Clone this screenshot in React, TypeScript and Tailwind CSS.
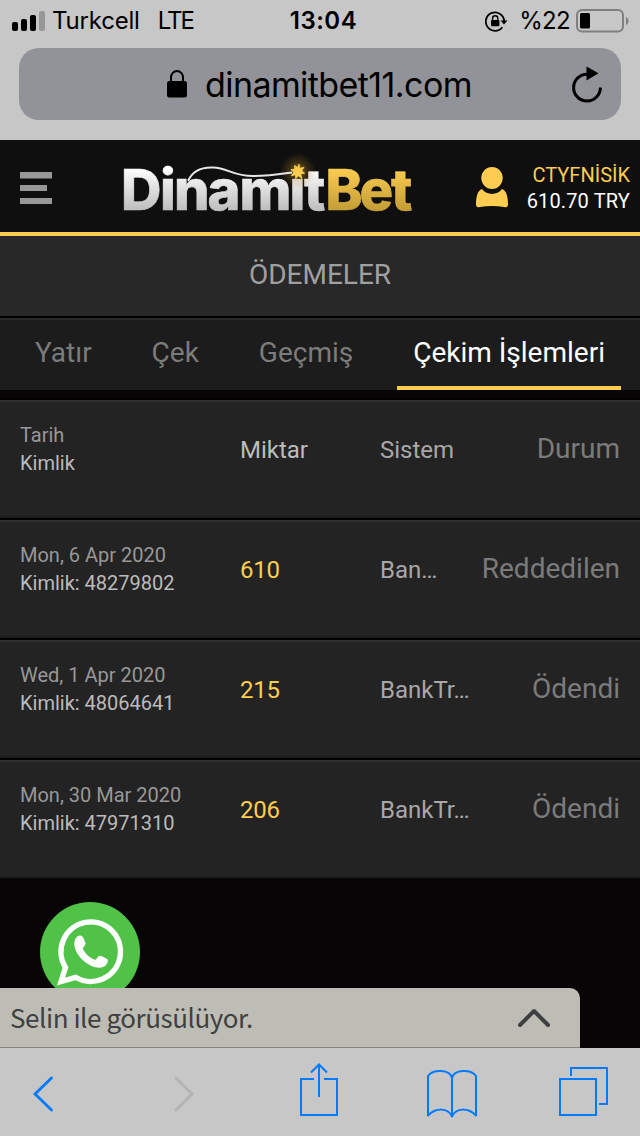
const tabs = ["Yatır", "Çek", "Geçmiş", "Çekim İşlemleri"];

const payments = [
  { date: "Mon, 6 Apr 2020", id: "48279802", amount: "610", system: "Ban…", status: "Reddedilen" },
  { date: "Wed, 1 Apr 2020", id: "48064641", amount: "215", system: "BankTr…", status: "Ödendi" },
  { date: "Mon, 30 Mar 2020", id: "47971310", amount: "206", system: "BankTr…", status: "Ödendi" },
];

const StatusBar = () => {
  return (
    <div className="flex h-[42px] items-center justify-between pl-3 pr-[11px] text-[24px] leading-[40px] text-black">
      <div className="flex w-[240px] items-center">
        <svg width="33" height="20" viewBox="0 0 33 20">
          <rect x="0" y="11" width="6" height="9" rx="2" />
          <rect x="9" y="8" width="6" height="12" rx="2" />
          <rect x="18" y="4" width="6" height="16" rx="2" />
          <rect x="27" y="0" width="6" height="20" rx="2" fill="#979797" />
        </svg>
        <span className="ml-[7px] tracking-[-0.2px]">Turkcell</span>
        <span className="ml-[18px] tracking-[-2px]">LTE</span>
      </div>
      <span className="pl-[6px] font-semibold tracking-[0.5px]">13:04</span>
      <div className="flex w-[240px] items-center justify-end">
        <svg width="23" height="21" viewBox="0 0 23 21" fill="none" stroke="#000" strokeWidth="1.8">
          <path d="M17.3 16.2A9.2 9.2 0 1 1 19.2 10" />
          <path d="M15.5 9.4h7l-3.5 4z" fill="#000" stroke="none" />
          <rect x="6" y="9" width="8.4" height="6.3" rx="1" fill="#000" stroke="none" />
          <path d="M7.6 9V7.3a2.6 2.6 0 0 1 5.2 0V9" strokeWidth="1.4" />
        </svg>
        <span className="ml-[11px] tracking-[-0.7px]">%22</span>
        <svg className="ml-[6px]" width="53" height="24" viewBox="0 0 53 24">
          <rect x="1" y="1" width="46" height="21.5" rx="5" fill="none" stroke="#7f7f7f" strokeWidth="2" />
          <rect x="4" y="4" width="10" height="15.5" rx="1.5" />
          <path d="M50 8c3.4 1.6 3.4 6.4 0 8z" fill="#7f7f7f" />
        </svg>
      </div>
    </div>
  );
};

const AddressBar = () => {
  return (
    <div className="mx-[19px] mt-[6px] flex h-[72px] items-center justify-between rounded-[20px] bg-[#929399] pl-[148px] pr-[18px]">
      <div className="flex items-center">
        <svg width="20" height="28" viewBox="0 0 20 28">
          <rect x="0" y="11" width="20" height="16.5" rx="2.5" />
          <path d="M4 13V7.5a6 6.5 0 0 1 12 0V13" fill="none" stroke="#000" strokeWidth="2" />
        </svg>
        <span className="ml-[18px] pt-[2px] text-[34px] leading-[40px] tracking-[-0.58px] text-black">
          dinamitbet11.com
        </span>
      </div>
      <svg width="32" height="38" viewBox="0 0 32 38">
        <path d="M16 9.2A13.4 13.4 0 1 0 29.4 22.5" fill="none" stroke="#000" strokeWidth="3" />
        <path d="M15.5 1.5 27.5 8.3 15.5 15.5z" />
      </svg>
    </div>
  );
};

const Logo = () => {
  return (
    <svg width="300" height="86" viewBox="118 143 300 86" className="font-[Inter,sans-serif]">
      <defs>
        <linearGradient id="silver" gradientUnits="userSpaceOnUse" x1="0" y1="168" x2="0" y2="211">
          <stop offset="0" stopColor="#ffffff" />
          <stop offset="1" stopColor="#bdbdbd" />
        </linearGradient>
        <linearGradient id="gold" gradientUnits="userSpaceOnUse" x1="0" y1="168" x2="0" y2="211">
          <stop offset="0" stopColor="#fccd50" />
          <stop offset="1" stopColor="#c39c35" />
        </linearGradient>
        <radialGradient id="glow">
          <stop offset="0" stopColor="#f5c23f" stopOpacity="0.6" />
          <stop offset="0.5" stopColor="#b98a24" stopOpacity="0.25" />
          <stop offset="1" stopColor="#b98a24" stopOpacity="0" />
        </radialGradient>
      </defs>
      <text x="121 160 174 207.5 239.500 289.500 304" y="210" fontSize="56" fontWeight="800" fill="url(#silver)" stroke="url(#silver)" strokeWidth="0.6">
        Dinamit
      </text>
      <text x="325.5 359.5 391" y="210" fontSize="56" fontWeight="800" fill="url(#gold)" stroke="url(#gold)" strokeWidth="0.6">
        Bet
      </text>
      {/* the spark takes the place of the second dot */}
      <rect x="289" y="162" width="15" height="16.500" fill="#0f0f0f" />
      <circle cx="298" cy="171" r="18" fill="url(#glow)" />
      <path d="M188 181c4-9 13-14 25-13.500 15 .5 20 8.500 40 8.500 16 0 28-2 39-3.500" fill="none" stroke="#e6e6e6" strokeWidth="2" />
      <path d="m299 164 .8 4.300 4.200-1-2.300 3.500 3 2.400-4 .7 1.300 4.600-3.700-2.700-2.600 3-.3-4.100-4 1.200 2.200-3.600-2.600-2.800 3.800-.2-.2-3.900 3 2z" fill="#fccd50" stroke="#fccd50" strokeWidth="0.8" />
    </svg>
  );
};

const Header = () => {
  return (
    <div className="flex h-24 border-b-4 border-[#fccc50] bg-[#0f0f0f] pl-5 pr-[10px]">
      <svg className="mt-[32px]" width="32" height="32" viewBox="0 0 32 32" fill="#989898">
        <rect width="32" height="6.5" />
        <rect y="13" width="27" height="6" />
        <rect y="26" width="32" height="6" />
      </svg>
      <div className="ml-[66px] mt-[3px]">
        <Logo />
      </div>
      <svg className="ml-[58px] mt-[27px]" width="32" height="41" viewBox="0 0 32 41" fill="#fccd50">
        <ellipse cx="16" cy="11" rx="10.7" ry="11" />
        <path d="M6 22c5 6.500 15 6.500 20 0 4.500 1.500 6 8 6 15.500 0 2.500-1.500 3-4 2.500-8-1.300-16-1.300-24 0-2.500.5-4 0-4-2.500C0 30 1.500 23.500 6 22z" />
      </svg>
      <div className="ml-auto mt-[22px] text-right text-[20px] leading-[26px]">
        <div className="text-[#fccd50]">CTYFNİSİK</div>
        <div className="tracking-[0.15px] text-white">610.70 TRY</div>
      </div>
    </div>
  );
};

const Tabs = () => {
  return (
    <div className="flex h-[74px] border-t-2 border-black bg-[#1c1c1c] text-[28px] leading-[32px]">
      <div className="flex w-full justify-between border-t-2 border-[#2a2a2a] pl-[19px] pr-[19px]">
        {tabs.map((tab) => (
          <div
            key={tab}
            className={
              tab === "Çekim İşlemleri"
                ? "border-b-4 border-[#fccc50] px-4 pt-[17px] text-white"
                : "px-4 pt-[17px] text-[#7b7b7b]"
            }
          >
            {tab}
          </div>
        ))}
      </div>
    </div>
  );
};

const Row = ({ top, bottom, amount, system, status, head }: {
  top: string;
  bottom: string;
  amount: string;
  system: string;
  status: string;
  head?: boolean;
}) => {
  return (
    <div className="flex h-[118px] border-b-2 border-t-2 border-b-[#1b1b1b] border-t-[#303030] bg-[#232323] px-5">
      <div className="w-[220px] pt-[19px] text-[20px] leading-[28px]">
        <div className="text-[#989898]">{top}</div>
        <div className="text-[#bbbbbb]">{bottom}</div>
      </div>
      <div className={head ? "w-[140px] pt-[34px] text-[24px] leading-[28px] text-[#bdbdbd]" : "w-[140px] pt-[34px] text-[24px] leading-[28px] tracking-[-0.2px] text-[#fccd50]"}>
        {amount}
      </div>
      <div className="pt-[34px] text-[24px] leading-[28px] text-[#a8a8a8]">{system}</div>
      <div className="ml-auto pt-[31px] text-[28px] leading-[32px] text-[#7b7b7b]">{status}</div>
    </div>
  );
};

const ChatBar = () => {
  return (
    <div className="absolute bottom-0 left-0 flex h-[60px] w-[580px] items-center justify-between rounded-tr-[10px] border-b border-[#85857f] bg-[#bdbdb5] pl-[10px] pr-[29px]">
      <span className="pb-[2px] font-['Noto_Sans_CJK_SC',sans-serif] text-[26px] leading-[40px] tracking-[-0.45px] text-[#404040]">
        Selin ile görüsülüyor.
      </span>
      <svg width="34" height="20" viewBox="0 0 34 20" fill="none" stroke="#404040" strokeWidth="4" strokeLinecap="round" strokeLinejoin="round">
        <path d="M3 17 17 3l14 14" />
      </svg>
    </div>
  );
};

const WhatsAppButton = () => {
  return (
    <div className="absolute left-10 top-6 h-[100px] w-[100px] rounded-full bg-[#4fc247]">
      <svg width="100" height="100" viewBox="0 0 100 100">
        <path
          d="M21 79.500 25.500 65.500A29.800 29.800 0 1 1 35.500 75.300z"
          fill="none"
          stroke="#fff"
          strokeWidth="5.4"
        />
        <path
          d="M37.500 34.300c3-2 5.500-.3 6.500 3l1.700 4.500c-.5 2-2.500 3-3 5 2.500 5 7 9 12.300 11.200 1.800-.8 3-3.500 4.500-4.200 3 .5 6 2.200 8.200 3.700.8 4.500-3.200 8-8.200 8.300C48 65.500 35.500 54 34.300 42.500c-.2-3.500 1-6.500 3.200-8.200z"
          fill="#fff"
        />
      </svg>
    </div>
  );
};

const Toolbar = () => {
  return (
    <div className="flex h-[88px] items-start bg-[#c7c7c7] pl-[32px] pt-[14px]">
      <svg width="22" height="60" viewBox="32 1062 22 60" fill="none" stroke="#007aff" strokeWidth="2.8" strokeLinecap="round">
        <path d="M51.500 1078 35 1094l16.500 16" />
      </svg>
      <svg className="ml-[119px]" width="22" height="60" viewBox="173 1062 22 60" fill="none" stroke="#b3b3b3" strokeWidth="2.8" strokeLinecap="round">
        <path d="M176 1078 192 1094l-16 16" />
      </svg>
      <svg className="ml-[104px]" width="40" height="60" viewBox="299 1062 40 60" fill="none" stroke="#007aff" strokeWidth="2">
        <path d="M314 1079H301v36h36v-36h-13M319 1097v-32M311 1072.500l8-8 8 8" />
      </svg>
      <svg className="ml-[87px]" width="52" height="60" viewBox="426 1062 52 60" fill="none" stroke="#007aff" strokeWidth="2" strokeLinejoin="round">
        <path d="M452 1117V1078c-2-9-19-9-24-2v39.500c8-8 20-8 24 1 4-9 16-9 24-1V1076c-5-7-22-7-24 2" />
      </svg>
      <svg className="ml-[81px]" width="50" height="60" viewBox="559 1062 50 60" fill="none" stroke="#007aff" strokeWidth="2">
        <path d="M560 1079h36v36h-36zM571 1076v-8h36v36h-8" />
      </svg>
    </div>
  );
};

const App = () => {
  return (
    <div className="flex h-[1136px] w-[640px] flex-col overflow-hidden bg-[#070506] font-[Roboto,sans-serif]">
      <div className="h-[140px] bg-[#c7c7c7] font-[Inter,sans-serif]">
        <StatusBar />
        <AddressBar />
      </div>
      <Header />
      <div className="h-20 bg-[#282828] pt-[23px] text-center text-[28px] leading-[32px] text-[#a0a0a0]">
        ÖDEMELER
      </div>
      <Tabs />

      {/* Withdrawal history */}
      <div className="mt-2 flex flex-col gap-[2px] border-t-2 border-black bg-black">
        <Row head top="Tarih" bottom="Kimlik" amount="Miktar" system="Sistem" status="Durum" />
        {payments.map((item) => (
          <Row
            key={item.id}
            top={item.date}
            bottom={`Kimlik: ${item.id}`}
            amount={item.amount}
            system={item.system}
            status={item.status}
          />
        ))}
      </div>

      <div className="relative grow">
        <WhatsAppButton />
        <ChatBar />
      </div>
      <Toolbar />
    </div>
  );
};

export default App;
